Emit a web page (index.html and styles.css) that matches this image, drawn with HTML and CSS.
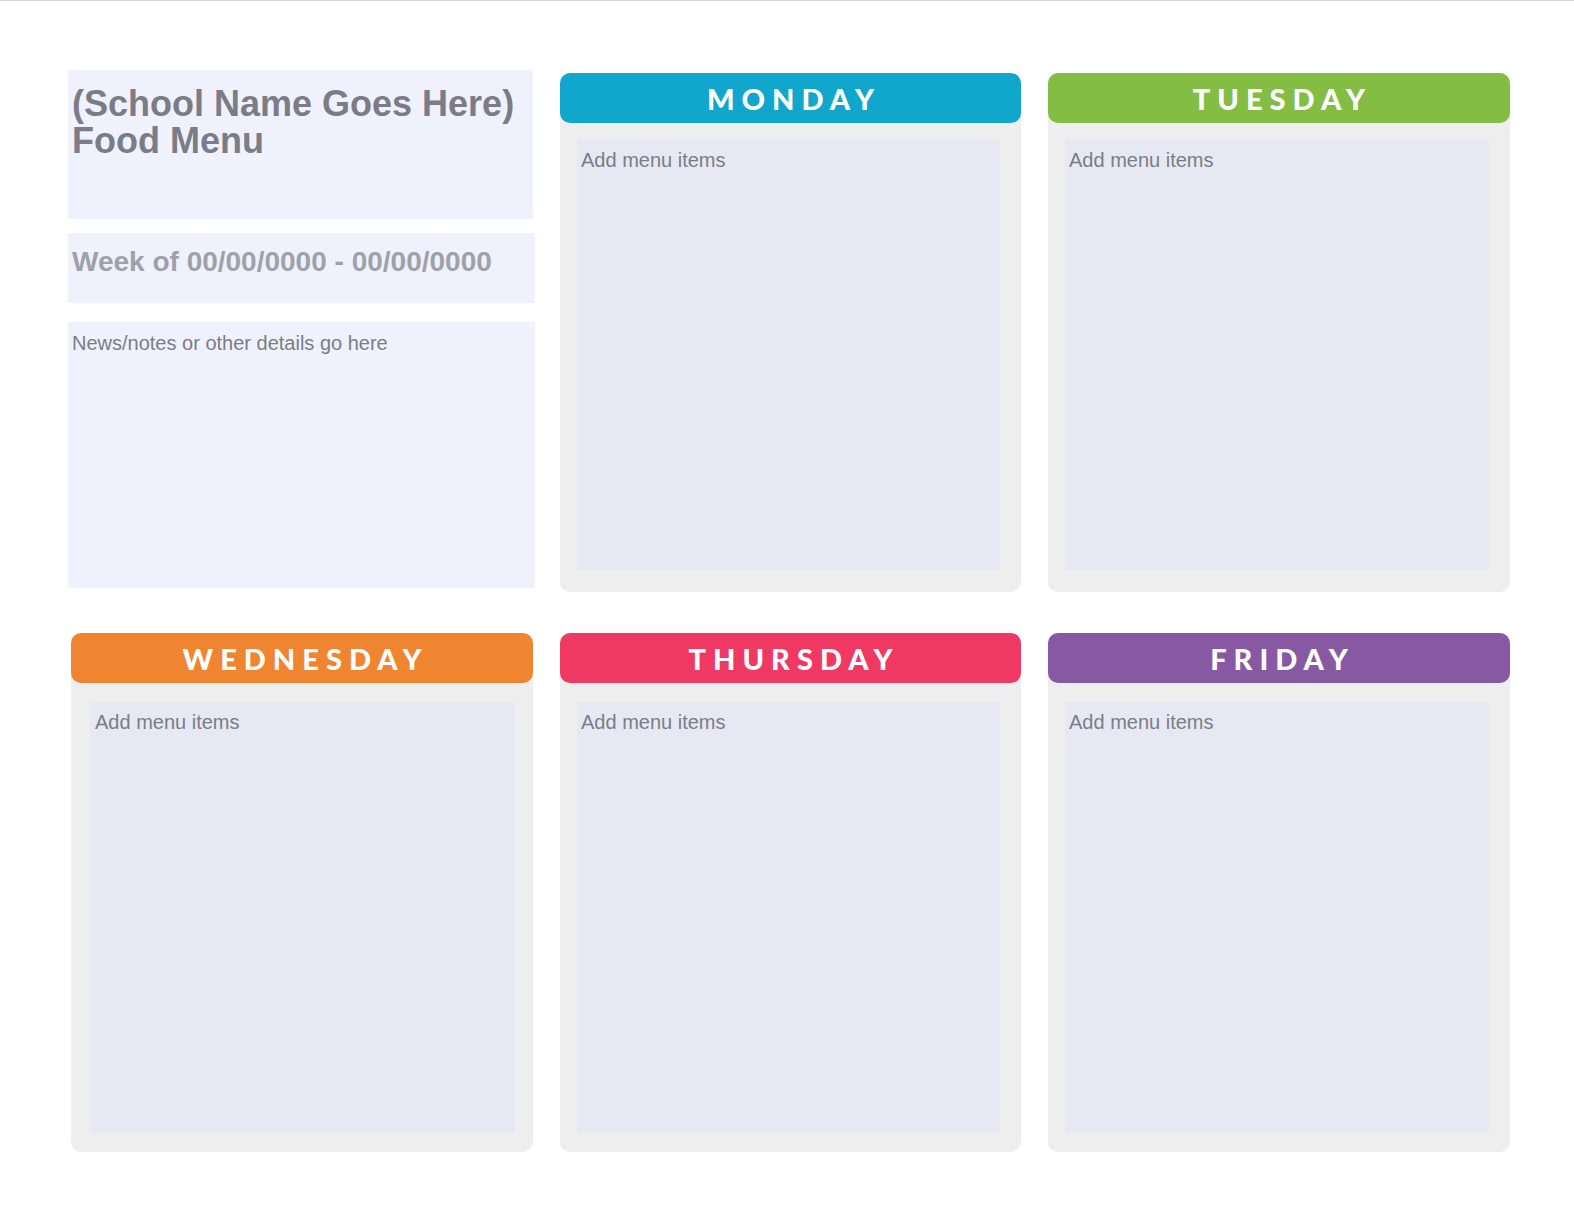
FILE: index.html
```html
<!DOCTYPE html>
<html>
<head>
<meta charset="utf-8">
<link rel="stylesheet" href="styles.css">
</head>
<body>
<div class="page">
  <div class="grid">
    <div class="intro">
      <div class="title-box"><h1 class="title">(School Name Goes Here) Food Menu</h1></div>
      <div class="week-box"><div class="week">Week of 00/00/0000 - 00/00/0000</div></div>
      <div class="notes-box"><div class="notes">News/notes or other details go here</div></div>
    </div>
    <div class="card">
      <div class="card-head mon">MONDAY</div>
      <div class="card-body"><div class="items">Add menu items</div></div>
    </div>
    <div class="card">
      <div class="card-head tue">TUESDAY</div>
      <div class="card-body"><div class="items">Add menu items</div></div>
    </div>
    <div class="card card-first">
      <div class="card-head wed">WEDNESDAY</div>
      <div class="card-body card-body-low card-body-first"><div class="items items-first">Add menu items</div></div>
    </div>
    <div class="card">
      <div class="card-head thu">THURSDAY</div>
      <div class="card-body card-body-low"><div class="items">Add menu items</div></div>
    </div>
    <div class="card">
      <div class="card-head fri">FRIDAY</div>
      <div class="card-body card-body-low"><div class="items">Add menu items</div></div>
    </div>
  </div>
</div>
</body>
</html>
```

FILE: styles.css
```css
html, body {
  margin: 0;
  padding: 0;
  background: #ffffff;
}
body {
  font-family: "Liberation Sans", Arial, sans-serif;
}
.page {
  border-top: 1px solid #d6d6d6;
  min-height: 1222px;
  box-sizing: border-box;
}
.grid {
  display: grid;
  grid-template-columns: 465px 461px 462px;
  grid-template-rows: 522px 522px;
  column-gap: 27px;
  row-gap: 38px;
  padding: 69px 0 0 68px;
}
.intro {
  display: flex;
  flex-direction: column;
}
.title-box {
  background: #eff2fd;
  height: 149px;
  box-sizing: border-box;
  padding: 15px 4px 0 4px;
}
.title {
  margin: 0;
  font-size: 36px;
  line-height: 37px;
  font-weight: 700;
  color: #7c7c86;
}
.week-box {
  background: #eff2fd;
  height: 70px;
  margin-top: 14px;
  box-sizing: border-box;
  padding: 13px 4px 0 4px;
  width: 467px;
}
.week {
  font-size: 28px;
  font-weight: 700;
  color: #a0a0a9;
  line-height: 32px;
}
.notes-box {
  background: #eff2fd;
  height: 266px;
  margin-top: 19px;
  box-sizing: border-box;
  padding: 10px 4px 0 4px;
  width: 467px;
}
.notes {
  font-size: 20px;
  color: #7c7c86;
  line-height: 22px;
}
.card {
  margin-top: 3px;
  background: #eeeeee;
  border-radius: 10px;
  display: flex;
  flex-direction: column;
  height: 519px;
}
.card-first {
  margin-left: 3px;
  width: 462px;
}
.card-head {
  height: 50px;
  border-radius: 10px;
  color: #ffffff;
  font-family: "Lato", "Open Sans", sans-serif;
  font-weight: 900;
  font-size: 29px;
  letter-spacing: 7px;
  text-indent: 7px;
  text-align: center;
  line-height: 52px;
}
.mon { background: #11a6cb; }
.tue { background: #83bd44; }
.wed { background: #ef8531; }
.thu { background: #ef3963; }
.fri { background: #8759a2; }
.card-body {
  flex: 1;
  padding: 17px 21px 22px 17px;
  display: flex;
}
.card-body-low {
  padding-top: 19px;
  padding-bottom: 20px;
}
.card-body-first {
  padding-left: 19px;
  padding-right: 18px;
}
.items {
  flex: 1;
  background: #e6e9f4;
  padding: 9px 4px;
  font-size: 20px;
  line-height: 22px;
  color: #7c7c86;
}
.items-first {
  padding-left: 5px;
}
```
